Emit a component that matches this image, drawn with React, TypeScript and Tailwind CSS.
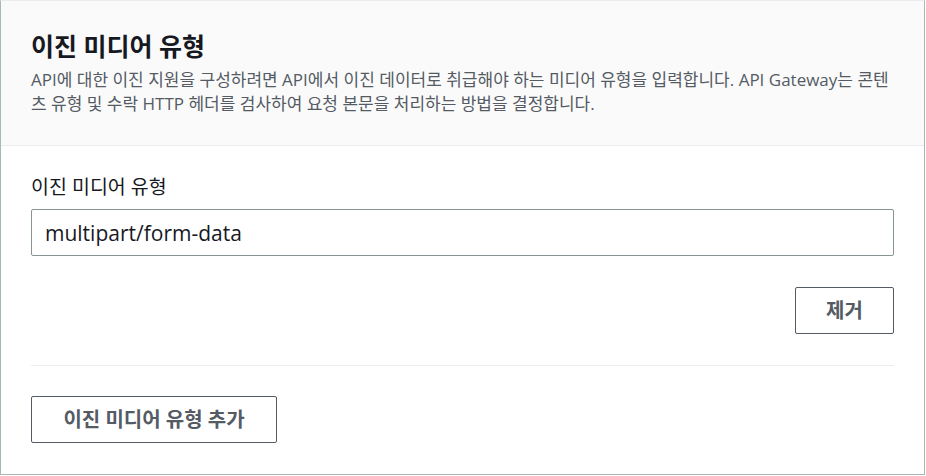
export default function App() {
  return (
    <div
      className="w-[925px] h-[475px] bg-white border border-[#aab7b8] border-t-[#eaeded] flex flex-col"
      style={{ fontFamily: '"Open Sans", "Noto Sans CJK KR", sans-serif' }}
    >
      {/* Header */}
      <div className="bg-[#fafafa] border-b border-[#eaeded] px-[30px] pt-[30px] pb-[29px]">
        <h2 className="text-[25px] leading-[30px] font-bold text-[#16191f]">이진 미디어 유형</h2>
        <p className="mt-[7px] text-[17px] leading-[24px] text-[#545b64]">
          API에 대한 이진 지원을 구성하려면 API에서 이진 데이터로 취급해야 하는 미디어 유형을 입력합니다. API Gateway는 콘텐츠 유형 및 수락 HTTP 헤더를 검사하여 요청 본문을 처리하는 방법을 결정합니다.
        </p>
      </div>

      {/* Body */}
      <div className="px-[30px] pt-[28px] flex flex-col">
        <label className="text-[19.5px] leading-[26px] text-[#16191f]">이진 미디어 유형</label>
        <input
          readOnly
          value="multipart/form-data"
          className="mt-[9px] h-[47px] w-full border border-[#879596] rounded-[2px] px-[13px] text-[21px] text-[#16191f] outline-none"
          style={{ fontFamily: 'inherit' }}
        />
        <div className="mt-[31px] flex justify-end">
          <button className="h-[47px] w-[99px] border border-[#545b64] rounded-[2px] text-[20px] font-bold text-[#545b64]">
            제거
          </button>
        </div>
        <div className="mt-[31px] border-t border-[#eaeded]" />
        <div className="mt-[30px]">
          <button className="h-[47px] w-[246px] border border-[#545b64] rounded-[2px] text-[20px] font-bold text-[#545b64]">
            이진 미디어 유형 추가
          </button>
        </div>
      </div>
    </div>
  );
}
